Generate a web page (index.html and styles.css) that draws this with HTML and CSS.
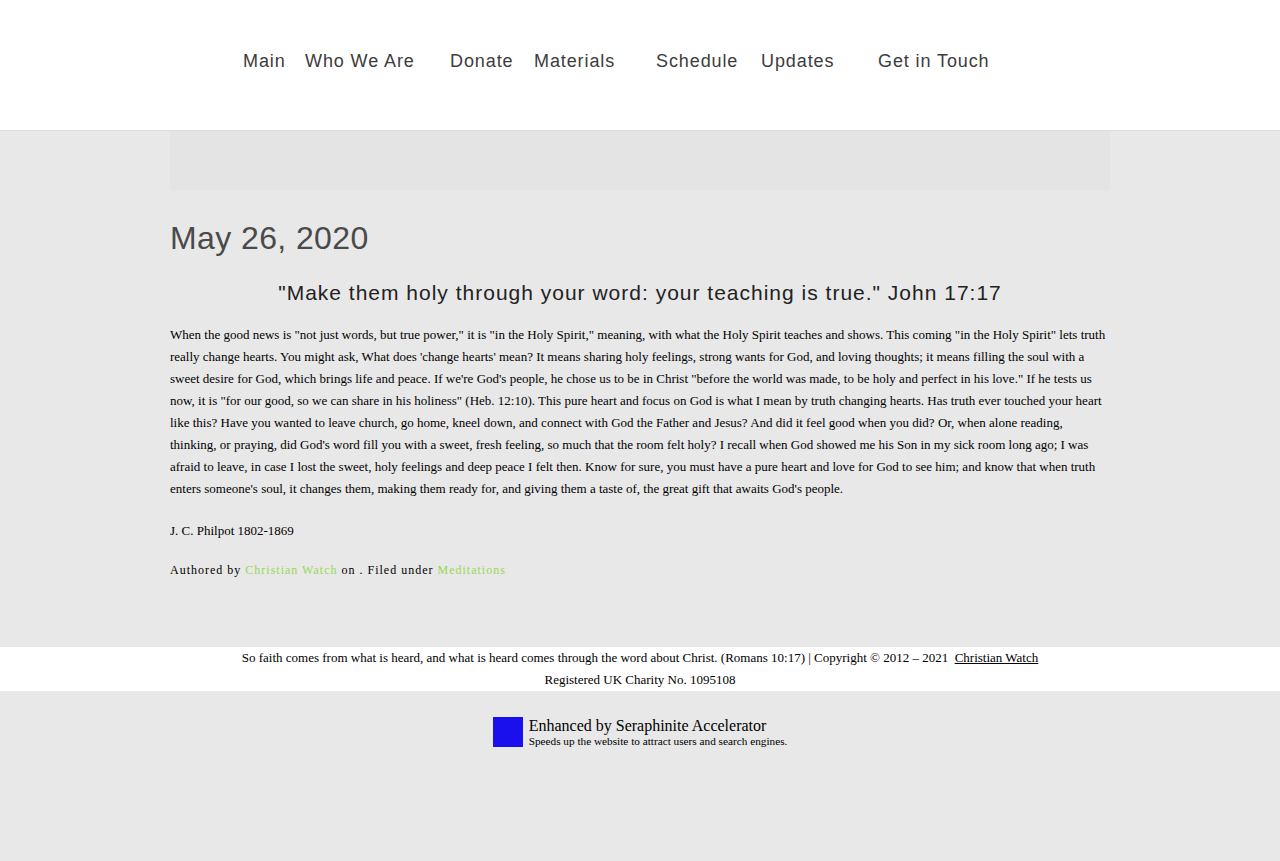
FILE: index.html
```html
<!DOCTYPE html>
<html>
<head>
<meta charset="utf-8">
<link rel="stylesheet" href="styles.css">
</head>
<body>
<header class="site-header">
  <nav class="nav">
    <a class="nav-link w62" href="#">Main</a>
    <a class="nav-link w145" href="#">Who We Are</a>
    <a class="nav-link w84" href="#">Donate</a>
    <a class="nav-link w122" href="#">Materials</a>
    <a class="nav-link w105" href="#">Schedule</a>
    <a class="nav-link w117" href="#">Updates</a>
    <a class="nav-link" href="#">Get in Touch</a>
  </nav>
</header>
<main class="content">
  <div class="banner"></div>
  <h1 class="date">May 26, 2020</h1>
  <h2 class="verse">"Make them holy through your word: your teaching is true." John 17:17</h2>
  <p class="body-text">When the good news is "not just words, but true power," it is "in the Holy Spirit," meaning, with what the Holy Spirit teaches and shows. This coming "in the Holy Spirit" lets truth really change hearts. You might ask, What does 'change hearts' mean? It means sharing holy feelings, strong wants for God, and loving thoughts; it means filling the soul with a sweet desire for God, which brings life and peace. If we're God's people, he chose us to be in Christ "before the world was made, to be holy and perfect in his love." If he tests us now, it is "for our good, so we can share in his holiness" (Heb. 12:10). This pure heart and focus on God is what I mean by truth changing hearts. Has truth ever touched your heart like this? Have you wanted to leave church, go home, kneel down, and connect with God the Father and Jesus? And did it feel good when you did? Or, when alone reading, thinking, or praying, did God's word fill you with a sweet, fresh feeling, so much that the room felt holy? I recall when God showed me his Son in my sick room long ago; I was afraid to leave, in case I lost the sweet, holy feelings and deep peace I felt then. Know for sure, you must have a pure heart and love for God to see him; and know that when truth enters someone's soul, it changes them, making them ready for, and giving them a taste of, the great gift that awaits God's people.</p>
  <p class="author">J. C. Philpot 1802-1869</p>
  <p class="meta">Authored by <a href="#">Christian Watch</a> on . Filed under <a href="#">Meditations</a></p>
</main>
<footer class="footer">
  <p>So faith comes from what is heard, and what is heard comes through the word about Christ. (Romans 10:17) | Copyright © 2012 – 2021 &nbsp;<a href="#">Christian Watch</a></p>
  <p>Registered UK Charity No. 1095108</p>
</footer>
<div class="badge-area">
  <div class="badge">
    <div class="badge-logo"></div>
    <div class="badge-text">
      <div class="badge-title">Enhanced by Seraphinite Accelerator</div>
      <div class="badge-sub">Speeds up the website to attract users and search engines.</div>
    </div>
  </div>
</div>
</body>
</html>
```
FILE: styles.css
```css
html, body {
  margin: 0;
  padding: 0;
}
body {
  background: #e8e8e8;
  font-family: "Liberation Serif", "Times New Roman", serif;
  color: #000;
}
.site-header {
  background: #fff;
  height: 131px;
  border-bottom: 1px solid #dcdcdc;
  box-sizing: border-box;
}
.nav {
  display: flex;
  align-items: center;
  height: 122px;
  padding-left: 243px;
}
.nav-link {
  font-family: "Liberation Sans", Arial, sans-serif;
  font-size: 18px;
  letter-spacing: 0.9px;
  color: #3c3c3c;
  text-decoration: none;
}
.w62 { width: 62px; }
.w145 { width: 145px; }
.w84 { width: 84px; }
.w122 { width: 122px; }
.w105 { width: 105px; }
.w117 { width: 117px; }

.content {
  width: 940px;
  margin: 0 auto;
  padding-bottom: 67px;
}
.banner {
  height: 59px;
  background: #e4e4e4;
  border-radius: 0 0 3px 3px;
}
.date {
  font-family: "Liberation Sans", Arial, sans-serif;
  font-weight: normal;
  font-size: 32px;
  letter-spacing: 0.4px;
  color: #4a4a4a;
  margin: 28px 0 0;
  line-height: 40px;
}
.verse {
  font-family: "Liberation Sans", Arial, sans-serif;
  font-weight: normal;
  font-size: 21px;
  letter-spacing: 1px;
  color: #222;
  text-align: center;
  margin: 20px 0 0;
  line-height: 30px;
}
.body-text {
  font-size: 13px;
  line-height: 22px;
  margin: 16px 0 0;
}
.author {
  font-size: 13px;
  line-height: 22px;
  margin: 20px 0 0;
}
.meta {
  font-size: 12px;
  letter-spacing: 1px;
  line-height: 20px;
  margin: 18px 0 0;
}
.meta a {
  color: #9bd653;
  text-decoration: none;
}
.footer {
  background: #fff;
  text-align: center;
  font-size: 13px;
  line-height: 22px;
  padding: 0;
}
.footer p {
  margin: 0;
}
.footer a {
  color: #000;
  text-decoration: underline;
}
.badge-area {
  display: flex;
  justify-content: center;
  padding-top: 25px;
  height: 145px;
}
.badge {
  display: flex;
  align-items: center;
  gap: 6px;
  height: 32px;
}
.badge-logo {
  width: 30px;
  height: 30px;
  background: #1a10ee;
}
.badge-text {
  display: flex;
  flex-direction: column;
}
.badge-title {
  font-size: 16px;
  line-height: 18px;
}
.badge-sub {
  font-size: 11.25px;
  line-height: 13px;
}
```
